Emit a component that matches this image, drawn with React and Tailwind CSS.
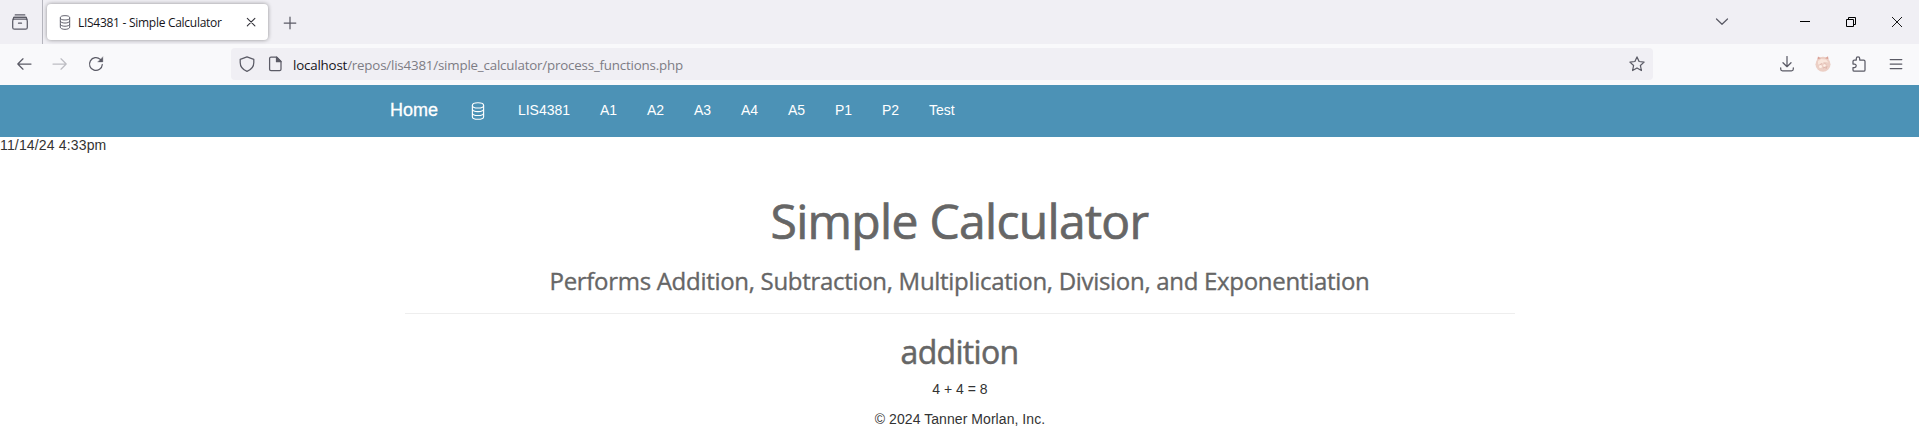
import React from "react";

function DatabaseIcon({ className }) {
  return (
    <svg className={className} viewBox="0 0 12 16" fill="none" stroke="currentColor" strokeWidth="1">
      <ellipse cx="6" cy="3" rx="5" ry="2.3" />
      <path d="M1 3v10c0 1.3 2.2 2.3 5 2.3s5-1 5-2.3V3M1 6.3c0 1.3 2.2 2.3 5 2.3s5-1 5-2.3M1 9.7c0 1.3 2.2 2.3 5 2.3s5-1 5-2.3" />
    </svg>
  );
}

function Icon({ children, className = "" }) {
  return (
    <svg
      className={"size-4 shrink-0 " + className}
      viewBox="0 0 16 16"
      fill="none"
      stroke="currentColor"
      strokeWidth="1.25"
      strokeLinecap="round"
      strokeLinejoin="round"
    >
      {children}
    </svg>
  );
}

function TabBar() {
  return (
    <div className="flex h-11 bg-[#f0eff4] text-[#5b5b66]">
      <div className="flex w-[43px] shrink-0 items-center border-r border-[#b5b5bd] pl-3">
        <Icon>
          <path d="M3.2 .9h9.6M1.7 3.4h12.6" />
          <rect x=".7" y="5.2" width="14.6" height="10" rx="1.8" />
          <path d="M1 5.3l1-1.9h12l1 1.9M6.5 9.2h3" />
        </Icon>
      </div>
      <div className="mt-1 ml-1 flex h-9 w-[221px] shrink-0 items-center rounded bg-white shadow-[0_0_4px_rgba(0,0,0,0.4)]">
        <DatabaseIcon className="ml-3 h-[15px] w-3" />
        <span className="mt-px ml-[7px] w-[160px] text-[12px] leading-4 tracking-[-0.28px] whitespace-nowrap text-[#15141a]">
          LIS4381 - Simple Calculator
        </span>
        <Icon className="ml-[5px] text-[#33323a]">
          <path d="M4.3 4.3l7.6 7.6M11.9 4.3l-7.6 7.6" strokeWidth="1.1" />
        </Icon>
      </div>
      <Icon className="mt-[15px] ml-[14px]">
        <path d="M8 2.2v11.6M2.2 8h11.6" />
      </Icon>
      <div className="flex-1" />
      <Icon className="mt-[14px] mr-[70px]">
        <path d="M2.5 5l5.5 5.3L13.5 5" />
      </Icon>
      <div className="mr-[17px] flex items-start gap-[36px] pt-[17px] text-black">
        <svg className="h-[10px] w-[10px]" viewBox="0 0 10 10" stroke="currentColor">
          <path d="M0 4.5h10" />
        </svg>
        <svg className="h-[10px] w-[10px]" viewBox="0 0 10 10" fill="none" stroke="currentColor">
          <path d="M.5 2.5h7v7h-7zM2.5 2.5v-2h7v7h-2" />
        </svg>
        <svg className="h-[10px] w-[10px]" viewBox="0 0 10 10" stroke="currentColor" strokeWidth=".9">
          <path d="M0 0l10 10M10 0L0 10" />
        </svg>
      </div>
    </div>
  );
}

function Toolbar() {
  return (
    <div className="flex h-[41px] items-start bg-[#f9f9fb] pt-1 text-[#5b5b66]">
      <div className="flex h-8 w-[231px] shrink-0 items-center gap-5 pl-4">
        <Icon>
          <path d="M15 8H1.8M7 2.8L1.8 8 7 13.2" />
        </Icon>
        <Icon className="text-[#bdbdc3]">
          <path d="M1 8h13.2M9 2.8L14.2 8 9 13.2" />
        </Icon>
        <Icon>
          <path d="M14.3 8.5a6.4 6.4 0 1 1-2-5.1l1.2 1.2" />
          <path d="M14.9 1v5h-5z" fill="currentColor" strokeWidth=".3" />
        </Icon>
      </div>
      <div className="flex h-8 w-[1422px] shrink-0 items-center rounded bg-[#f0eff4] pl-2">
        <Icon>
          <path d="M8 .9L1.2 3.3v3.1c0 4 2.5 7.2 6.8 8.9 4.3-1.7 6.8-4.9 6.8-8.9V3.3z" />
        </Icon>
        <Icon className="ml-3">
          <path d="M4 1.2h5.8L14 5.4v7.8a1.4 1.4 0 0 1-1.4 1.4H4a1.4 1.4 0 0 1-1.4-1.4V2.6A1.4 1.4 0 0 1 4 1.2z" />
          <path d="M9.5 1.2v4.5H14z" fill="currentColor" />
        </Icon>
        <span className="mt-[2px] ml-[10px] text-[13.33px] leading-5 tracking-[-0.19px] whitespace-nowrap text-[#7d7c84]">
          <span className="text-[#15141a]">localhost</span>/repos/lis4381/simple_calculator/process_functions.php
        </span>
        <Icon className="mr-2 ml-auto">
          <path d="M8 .9l2.1 4.6 5 .6-3.7 3.4 1 5L8 12l-4.4 2.5 1-5L.9 6.1l5-.6z" />
        </Icon>
      </div>
      <div className="flex h-8 flex-1 items-center justify-end gap-5 pr-[15px]">
        <Icon>
          <path d="M8 .5v10.2M4 6.7l4 4 4-4M1.7 11.8v1.2c0 1 .8 1.8 1.8 1.8h9c1 0 1.8-.8 1.8-1.8v-1.2" />
        </Icon>
        <svg className="size-4" viewBox="0 0 16 16">
          <circle cx="8" cy="8.3" r="7.5" fill="#eccfc5" />
          <path d="M2.3 3.5L3 .5l3 1.8zM10 2.3L13 .3l.5 3z" fill="#dba398" />
          <path d="M3 5l3-2 5 .5 2.5 3-3.5-.5-3 1.5-4 1z" fill="#f9e6dc" />
          <path d="M5 8.5l2-1M9 6.5l2 2M8 12l3-1M12 10l-1 3" stroke="#dcb3a8" strokeWidth=".8" />
          <circle cx="5.5" cy="10.5" r="1.5" fill="#fff0e7" />
          <circle cx="9.5" cy="9.5" r="1.2" fill="#fff0e7" />
        </svg>
        <Icon className="mr-px">
          <path d="M2 5.4c0-.8.5-1.300 1.300-1.300h2V2.600a1.700 1.700 0 0 1 3.400 0v1.500h4c.8 0 1.300.5 1.300 1.300v8.500c0 .8-.5 1.300-1.300 1.300H3.300c-.8 0-1.300-.5-1.300-1.300v-2.400h1.500a1.700 1.700 0 0 0 0-3.400H2z" />
        </Icon>
        <Icon>
          <path d="M2.200 3.500h11.600M2.200 8h11.600M2.200 12.500h11.600" />
        </Icon>
      </div>
    </div>
  );
}

const links = ["LIS4381", "A1", "A2", "A3", "A4", "A5", "P1", "P2", "Test"];

function Navbar() {
  return (
    <nav className="flex h-[52px] bg-[#4c92b6] pl-[375px] text-[14px] leading-5 text-white">
      <a className="w-20 pt-[15px] pl-[15px] text-[18px] [-webkit-text-stroke:0.3px_white]">Home</a>
      <a className="w-12 pt-[17px] pl-[16px]">
        <DatabaseIcon className="h-[18px] w-[14px]" />
      </a>
      {links.map((label) => (
        <a key={label} className="px-[14.94px] pt-[15px]">
          {label}
        </a>
      ))}
    </nav>
  );
}

export default function App() {
  return (
    <div className="h-[437px] overflow-hidden bg-white font-['Liberation_Sans',Arial,sans-serif] text-[14px] leading-5 text-[#333]">
      <header className="font-['Open_Sans','Noto_Sans',sans-serif]">
        <TabBar />
        <Toolbar />
      </header>
      <Navbar />
      <div className="-mt-[2px] h-5 tracking-[0.16px]">11/14/24 4:33pm</div>
      <main className="mx-auto flex w-[1110px] flex-col items-center">
        <h1 className="mt-[39px] font-['Open_Sans',sans-serif] text-[48px] leading-[53px] tracking-[-0.69px] text-[#666] [-webkit-text-stroke:0.7px_#666]">
          Simple Calculator
        </h1>
        <h3 className="mt-[21px] font-['Open_Sans',sans-serif] text-[24px] leading-[26px] tracking-[-0.3px] whitespace-nowrap text-[#666] [-webkit-text-stroke:0.35px_#666]">
          Performs Addition, Subtraction, Multiplication, Division, and Exponentiation
        </h3>
        <hr className="mt-[19px] w-full border-[#eee]" />
        <h2 className="mt-[20px] font-['Open_Sans',sans-serif] text-[32px] leading-[35px] tracking-[-0.7px] text-[#666] [-webkit-text-stroke:0.5px_#666]">
          addition
        </h2>
        <p className="mt-[10px] pl-px">4 + 4 = 8</p>
        <p className="mt-[10px] pl-px tracking-[0.06px]">© 2024 Tanner Morlan, Inc.</p>
      </main>
    </div>
  );
}
